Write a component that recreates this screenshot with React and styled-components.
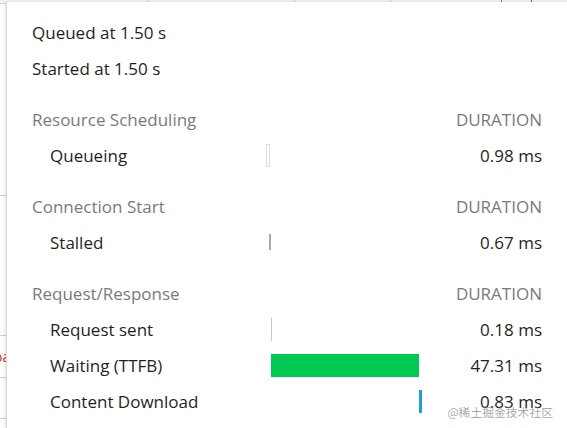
import React from "react";
import styled, { createGlobalStyle } from "styled-components";

const Global = createGlobalStyle`
  html, body { margin: 0; padding: 0; background: #ffffff; }
  body { width: 567px; height: 428px; overflow: hidden; font-family: "Open Sans", "Noto Sans", sans-serif; }
`;

const Page = styled.div`
  position: relative;
  width: 567px;
  height: 428px;
  background: #ffffff;
  overflow: hidden;
`;

const TopStrip = styled.div`
  display: flex;
  height: 3px;
  border-bottom: 1px solid #d6d6d6;
  background: #f3f3f3;
`;

const StripCell = styled.div`
  width: ${(p) => p.$w}px;
  border-right: 1px solid ${(p) => p.$c || "#cfcfcf"};
`;

const SideRow = styled.div`
  position: absolute;
  left: 0;
  top: ${(p) => p.$top}px;
  width: 6px;
  height: 1px;
  background: #d0d0d0;
`;

const SideText = styled.div`
  position: absolute;
  left: -6px;
  top: 347px;
  font-size: 14px;
  color: #c0392b;
`;

const Popup = styled.div`
  position: absolute;
  left: 7px;
  top: 2px;
  width: 600px;
  height: 440px;
  background: #ffffff;
  box-shadow: -1px 0 0 #dcdcdc, -2px 0 3px rgba(0, 0, 0, 0.12);
  padding: 13px 0 0 25px;
  box-sizing: border-box;
`;

const Content = styled.div`
  width: 510px;
  display: flex;
  flex-direction: column;
`;

const Line = styled.div`
  font-size: 17px;
  color: #1f1f1f;
  height: 36px;
  line-height: 36px;
`;

const Section = styled.div`
  display: flex;
  flex-direction: column;
  margin-top: ${(p) => p.$mt}px;
`;

const Header = styled.div`
  display: flex;
  justify-content: space-between;
  height: 35px;
  line-height: 36px;
  font-size: 17px;
  color: #7a7a7a;
`;

const Row = styled.div`
  display: grid;
  grid-template-columns: 233px 160px 1fr;
  align-items: center;
  height: 36px;
  font-size: 17px;
  color: #1f1f1f;
`;

const Label = styled.div`
  padding-left: 18px;
`;

const Track = styled.div`
  position: relative;
  height: 23px;
`;

const Bar = styled.div`
  position: absolute;
  top: ${(p) => p.$top || 0}px;
  left: ${(p) => p.$left}px;
  width: ${(p) => p.$w}px;
  height: ${(p) => p.$h || 23}px;
  background: ${(p) => p.$bg};
  border: ${(p) => p.$border || "none"};
  box-sizing: border-box;
`;

const Value = styled.div`
  text-align: right;
`;

const Watermark = styled.div`
  position: absolute;
  right: 14px;
  bottom: 8px;
  font-size: 11.8px;
  color: rgba(140, 140, 140, 0.75);
  font-family: "Noto Sans CJK SC", "Open Sans", sans-serif;
`;

const sections = [
  {
    title: "Resource Scheduling",
    mt: 15,
    rows: [{ label: "Queueing", value: "0.98 ms", bar: { left: 1, w: 4, h: 23, bg: "#fff", border: "1px solid #dddddd" } }],
  },
  {
    title: "Connection Start",
    mt: 16,
    rows: [{ label: "Stalled", value: "0.67 ms", bar: { left: 4, w: 2, h: 16, top: 3, bg: "#a9a9a9" } }],
  },
  {
    title: "Request/Response",
    mt: 16,
    rows: [
      { label: "Request sent", value: "0.18 ms", bar: { left: 6, w: 1, h: 23, bg: "#c8c8c8" } },
      { label: "Waiting (TTFB)", value: "47.31 ms", bar: { left: 6, w: 148, h: 23, bg: "#00c853" } },
      { label: "Content Download", value: "0.83 ms", bar: { left: 154, w: 3, h: 23, bg: "#1a9fe0" } },
    ],
  },
];

export default function App() {
  return (
    <Page>
      <Global />
      <TopStrip>
        <StripCell $w={147} />
        <StripCell $w={146} />
        <StripCell $w={95} />
        <StripCell $w={110} $c="#4a90d9" />
        <StripCell $w={29} $c="#d0445a" />
      </TopStrip>
      <SideRow $top={195} />
      <SideRow $top={335} />
      <SideRow $top={377} />
      <SideRow $top={418} />
      <SideText>oa</SideText>
      <Popup>
        <Content>
          <Line>Queued at 1.50 s</Line>
          <Line>Started at 1.50 s</Line>
          {sections.map((s) => (
            <Section key={s.title} $mt={s.mt}>
              <Header>
                <span>{s.title}</span>
                <span>DURATION</span>
              </Header>
              {s.rows.map((r) => (
                <Row key={r.label}>
                  <Label>{r.label}</Label>
                  <Track>
                    <Bar $left={r.bar.left} $w={r.bar.w} $h={r.bar.h} $top={r.bar.top} $bg={r.bar.bg} $border={r.bar.border} />
                  </Track>
                  <Value>{r.value}</Value>
                </Row>
              ))}
            </Section>
          ))}
        </Content>
      </Popup>
      <Watermark>@稀土掘金技术社区</Watermark>
    </Page>
  );
}
